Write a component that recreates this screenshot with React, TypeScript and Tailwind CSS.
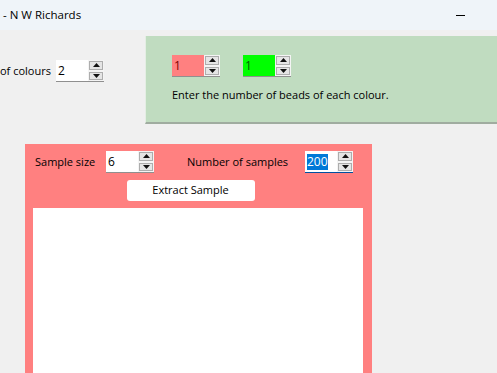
import React from "react";

const font = { fontFamily: '"Open Sans", "Noto Sans", "Liberation Sans", sans-serif' };

function Arrow({ up }: { up?: boolean }) {
	return (
		<svg width="7" height="4" viewBox="0 0 7 4" className="block">
			{up ? <path d="M0 4 L3.5 0 L7 4 Z" fill="#111" /> : <path d="M0 0 L7 0 L3.5 4 Z" fill="#111" />}
		</svg>
	);
}

function Spinner({
	value,
	bg = "bg-white",
	text = "text-black",
	selected = false,
}: {
	value: string;
	bg?: string;
	text?: string;
	selected?: boolean;
}) {
	return (
		<div className={`flex h-[22px] w-[48px] shrink-0 ${selected ? "border-b border-[#0050a0]" : "border-b border-[#8f8f8f]"} bg-white`}>
			<div className={`flex h-full w-[32px] items-center pl-[2px] ${bg}`}>
				{selected ? (
					<span className="bg-[#0078d7] text-[12px] leading-[16px] text-white">{value}</span>
				) : (
					<span className={`text-[12px] leading-[16px] ${text}`}>{value}</span>
				)}
			</div>
			<div className="flex w-[16px] flex-col justify-center gap-[2px] bg-[#f4f4f4] p-px">
				<div className="flex h-[9px] items-center justify-center border border-[#adadad] bg-[#e5e5e5]">
					<Arrow up />
				</div>
				<div className="flex h-[9px] items-center justify-center border border-[#adadad] bg-[#e5e5e5]">
					<Arrow />
				</div>
			</div>
		</div>
	);
}

export default function App() {
	return (
		<div className="flex h-[373px] w-[497px] flex-col overflow-hidden bg-[#f0f0f0] text-[11px] text-black" style={font}>
			<div className="flex h-[30px] shrink-0 items-center justify-between bg-[#eff4f9] pr-[32px] pl-[3px]">
				<span className="text-[11.5px]">- N W Richards</span>
				<span className="block h-px w-[9px] bg-black" />
			</div>

			<div className="flex shrink-0 items-start">
				<div className="mt-[30px] flex w-[145px] shrink-0 items-center gap-[8px]">
					<span className="w-[48px] whitespace-nowrap">of colours</span>
					<Spinner value="2" />
				</div>
				<div className="mt-[6px] h-[88px] flex-1 border-b-2 border-l border-b-[#a0aca0] border-l-[#e4eee4] bg-[#c0dcc0] pt-[19px] pl-[26px]">
					<div className="flex gap-[23px]">
						<Spinner value="1" bg="bg-[#ff8080]" text="text-[#800000]" />
						<Spinner value="1" bg="bg-[#00ff00]" text="text-[#006000]" />
					</div>
					<div className="mt-[10px]">Enter the number of beads of each colour.</div>
				</div>
			</div>

			<div className="mt-[20px] ml-[25px] flex w-[347px] flex-1 flex-col bg-[#ff8080] px-[8px] pt-[7px]">
				<div className="flex items-center">
					<span className="ml-[2px] w-[71px]">Sample size</span>
					<Spinner value="6" />
					<span className="ml-[33px] w-[118px]">Number of samples</span>
					<Spinner value="200" selected />
				</div>
				<div className="mt-[7px] flex justify-center pr-[16px]">
					<button className="h-[21px] w-[128px] rounded-[3px] bg-white text-[11px]">Extract Sample</button>
				</div>
				<div className="mt-[7px] w-[330px] flex-1 bg-white" />
			</div>
		</div>
	);
}
